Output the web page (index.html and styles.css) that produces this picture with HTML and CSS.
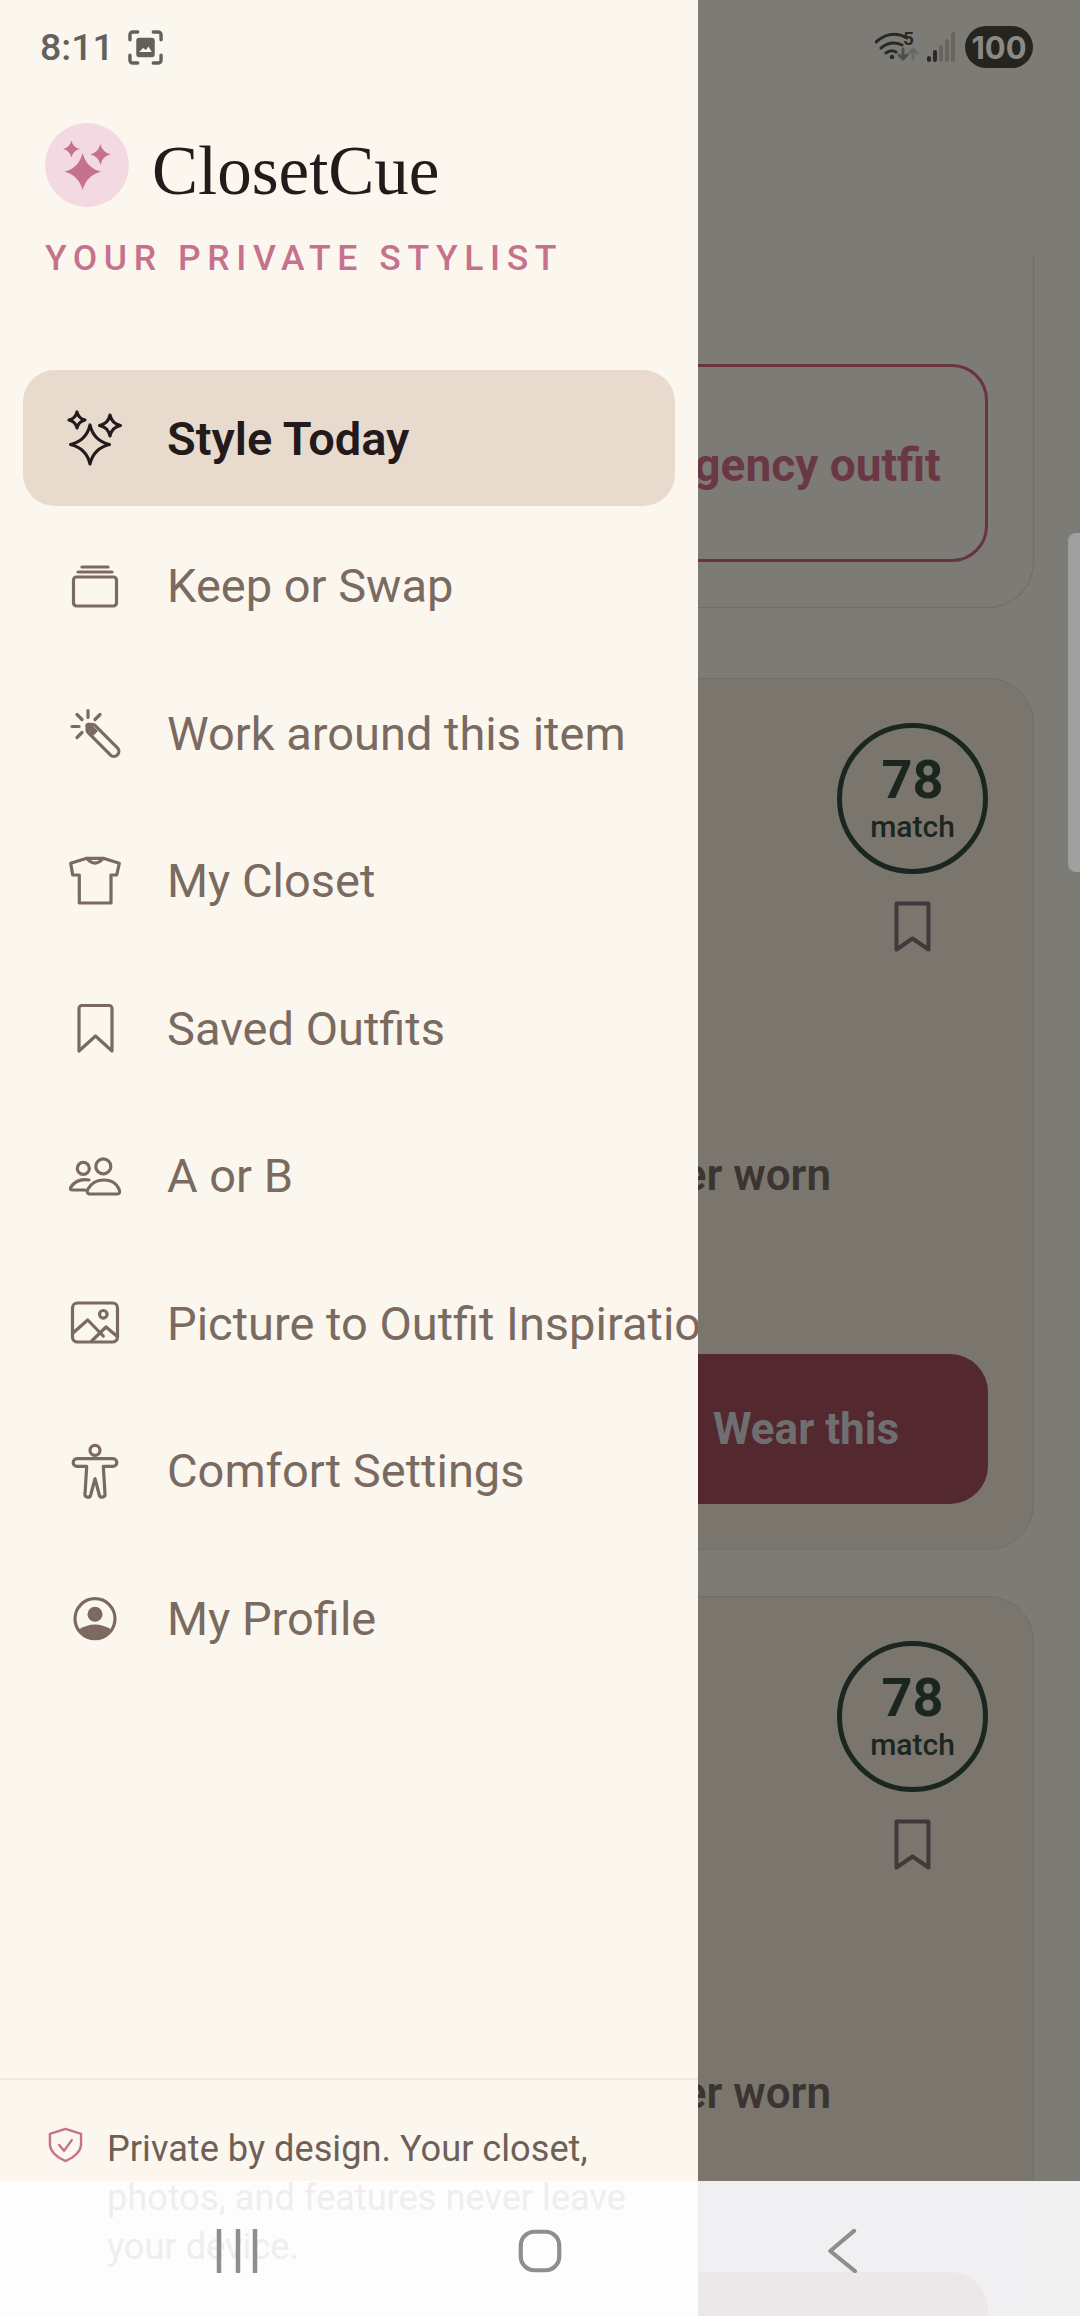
FILE: index.html
```html
<!DOCTYPE html>
<html>
<head>
<meta name="viewport" content="width=device-width, initial-scale=1">
<link rel="stylesheet" href="styles.css">
</head>
<body>
<div class="screen">

  <!-- dimmed page behind the drawer -->
  <div class="backdrop">
    <div class="card card-top">
      <div class="btn-outline">Emergency outfit</div>
    </div>
    <div class="card card-fill">
      <div class="score"><b>78</b><span>match</span></div>
      <svg class="save" viewBox="0 0 37 51"><path d="M2.5 2.5h32v46l-16-11-16 11z"/></svg>
      <div class="worn">Never worn</div>
      <div class="btn-wear">Wear this</div>
    </div>
    <div class="card card-fill">
      <div class="score"><b>78</b><span>match</span></div>
      <svg class="save" viewBox="0 0 37 51"><path d="M2.5 2.5h32v46l-16-11-16 11z"/></svg>
      <div class="worn">Never worn</div>
      <div class="btn-wear">Wear this</div>
    </div>
  </div>
  <div class="scroll-thumb"></div>

  <div class="drawer">
    <div class="brand">
      <div class="brand-row">
        <svg class="logo" viewBox="0 0 84 84">
          <circle cx="42" cy="42" r="42" fill="#f2d9e2"/>
          <path fill="#c6728c" d="M37.600 30Q41.500 45 56 48.700Q41.500 52.500 37.600 67Q33.700 52.500 19.600 48.700Q33.700 45 37.600 30z"/>
          <path fill="#c6728c" d="M26.400 17.500Q28 24.500 35 26Q28 27.500 26.400 34.500Q24.800 27.500 18 26Q24.800 24.500 26.400 17.500z"/>
          <path fill="#c6728c" d="M55.400 21Q57.400 29.300 65.500 31.300Q57.400 33.300 55.400 42Q53.400 33.300 45.400 31.300Q53.400 29.300 55.400 21z"/>
        </svg>
        <div class="brand-name">ClosetCue</div>
      </div>
      <div class="tagline">YOUR PRIVATE STYLIST</div>
    </div>

    <ul class="menu">
      <li class="menu-item selected">
        <svg class="ico" viewBox="0 0 60 60">
          <path d="M25 17Q28.500 32.500 44.500 36.500Q28.500 40.500 25 56Q21.500 40.500 5.500 36.500Q21.500 32.500 25 17z"/>
          <path d="M12 4Q13.500 10.500 20 12Q13.500 13.500 12 20Q10.500 13.500 4 12Q10.500 10.500 12 4z"/>
          <path d="M45 7Q46.800 15.700 55.500 17.500Q46.800 19.300 45 28Q43.200 19.300 34.500 17.500Q43.200 15.700 45 7z"/>
        </svg>
        <span>Style Today</span>
      </li>
      <li class="menu-item">
        <svg class="ico" viewBox="0 0 60 60">
          <rect x="8.500" y="21" width="43" height="29" rx="3"/>
          <path d="M13 16h34M17 11h26"/>
        </svg>
        <span>Keep or Swap</span>
      </li>
      <li class="menu-item">
        <svg class="ico" viewBox="0 0 60 60">
          <path d="M23 7.500v7M12 11.500l5 5M35 11.500l-5 5M7 23.500h7M12 34.500l5-5"/>
          <rect x="18" y="31" width="41" height="10" rx="5" transform="rotate(45 36.500 36)"/>
          <path class="solid" d="M21 25a3 3 0 0 1 5-4l7 7-5 5z"/>
        </svg>
        <span>Work around this item</span>
      </li>
      <li class="menu-item">
        <svg class="ico" viewBox="0 0 60 60">
          <path d="M21.700 7.300Q30 17 38.300 7.300L54.300 12.300L51.700 24H46V52H14.300V24H7.700L5.700 12.300z"/>
          <path d="M21.700 7.300H38.300"/>
        </svg>
        <span>My Closet</span>
      </li>
      <li class="menu-item">
        <svg class="ico" viewBox="0 0 60 60">
          <path d="M17 7.500h27a3 3 0 0 1 3 3v42.500L30.500 38 14 53V10.500a3 3 0 0 1 3-3z"/>
        </svg>
        <span>Saved Outfits</span>
      </li>
      <li class="menu-item">
        <svg class="ico" viewBox="0 0 60 60">
          <circle cx="38.300" cy="20.400" r="7.500"/>
          <circle cx="18.300" cy="22.400" r="6"/>
          <path d="M24 48Q21 47 23 43Q28 34 39 34Q50 34 54 43Q56 48 52 48z"/>
          <path d="M24 34Q12 32 6 41Q4 44 8 44H20"/>
        </svg>
        <span>A or B</span>
      </li>
      <li class="menu-item">
        <svg class="ico" viewBox="0 0 60 60">
          <rect x="7.500" y="10" width="45" height="39" rx="5"/>
          <circle cx="38.300" cy="21.300" r="3.800"/>
          <path d="M8.300 39.700L22.700 27L38.300 43M26.700 48L41 34L51.700 43"/>
        </svg>
        <span>Picture to Outfit Inspiration</span>
      </li>
      <li class="menu-item">
        <svg class="ico" viewBox="0 0 60 60">
          <circle cx="30" cy="9.300" r="5"/>
          <path d="M12 17.700H48a3.800 3.800 0 0 1 0 7.600H38.300L40 53a2.900 2.900 0 0 1-5.700 1L30 37.700L25.700 54a2.900 2.900 0 0 1-5.700-1L21.700 25.300H12a3.800 3.800 0 0 1 0-7.600z"/>
        </svg>
        <span>Comfort Settings</span>
      </li>
      <li class="menu-item">
        <svg class="ico" viewBox="0 0 60 60">
          <circle cx="30" cy="30.700" r="20"/>
          <circle class="solid" cx="30" cy="26.300" r="7.500"/>
          <path class="solid" d="M13 42Q30 31 47 42A20 20 0 0 1 13 42z"/>
        </svg>
        <span>My Profile</span>
      </li>
    </ul>

    <div class="drawer-foot">
      <svg class="shield" viewBox="0 0 36 36">
        <path d="M18 1.500L34 6.500V18Q33 28 18 34.500Q3 28 2 18V6.500z"/>
        <path d="M11.500 18l5 6 8-11"/>
      </svg>
      <p>Private by design. Your closet, photos, and features never leave your device.</p>
    </div>
  </div>

  <div class="status-bar">
    <div class="status-left">
      <span class="clock">8:11</span>
      <svg class="shot" viewBox="0 0 36 36">
        <path d="M2 10V5a3 3 0 0 1 3-3h5M26 2h5a3 3 0 0 1 3 3v5M34 26v5a3 3 0 0 1-3 3h-5M10 34H5a3 3 0 0 1-3-3v-5"/>
        <rect class="shot-fill" x="8.500" y="8" width="19" height="20" rx="3"/>
        <path class="shot-pic" d="M11.500 22.500l4-4 3 2 2.500-3.500 3.500 5.500z"/>
      </svg>
    </div>
    <div class="status-right">
      <svg class="wifi" viewBox="0 0 44 32">
        <path d="M1 11Q16-2 32 7M6 17Q16 9 27 14M11 22Q16 18 21 21"/>
        <circle cx="17" cy="26" r="2.300"/>
        <text x="28" y="14">5</text>
        <path class="wifi-down" d="M28 18v10M24 24l4 4 4-4"/>
        <path class="wifi-up" d="M38 28V18M34 22l4-4 4 4"/>
      </svg>
      <svg class="signal" viewBox="0 0 28 30">
        <rect class="on" x="0" y="24" width="4" height="6" rx="2"/>
        <rect class="on" x="6" y="18" width="4" height="12" rx="2"/>
        <rect x="12" y="13" width="4" height="17" rx="2"/>
        <rect x="18" y="7" width="4" height="23" rx="2"/>
        <rect x="24" y="0" width="4" height="30" rx="2"/>
      </svg>
      <span class="battery">100</span>
    </div>
  </div>

  <div class="nav-bar">
    <svg class="nav-ico" viewBox="0 0 44 44"><path d="M3 1v42M22 1v42M39 1v42"/></svg>
    <svg class="nav-ico" viewBox="0 0 48 48"><rect x="3" y="3" width="42" height="42" rx="15"/></svg>
    <svg class="nav-ico" viewBox="0 0 44 48"><path d="M35 2L9 24l27 22"/></svg>
  </div>
</div>
</body>
</html>
```

FILE: styles.css
```css
* {
  box-sizing: border-box;
}

body {
  margin: 0;
  font-family: Roboto, "Liberation Sans", sans-serif;
}

.screen {
  position: relative;
  width: 1080px;
  height: 2316px;
  overflow: hidden;
  background: #7c7b76;
}

/* page behind the scrim */
.backdrop {
  position: absolute;
  top: 255px;
  left: 0;
  right: 0;
  padding: 0 46px;
}

.card {
  border: 1px solid #706e67;
  border-radius: 46px;
  padding: 44px 45px 45px;
  display: flex;
  flex-direction: column;
  margin-bottom: 46px;
}

.card-top {
  height: 353px;
  padding-top: 109px;
  margin-bottom: 70px;
  border-top: 0;
  border-left: 0;
  border-top-left-radius: 0;
  border-top-right-radius: 0;
}

.card-fill {
  background: #7a766d;
}

.btn-outline {
  align-self: flex-end;
  width: 466px;
  height: 200px;
  padding: 4px 0 0 18px;
  border: 3px solid #6a3340;
  border-radius: 36px;
  display: flex;
  align-items: center;
  justify-content: center;
  font-size: 46px;
  font-weight: 700;
  color: #6a3845;
}

.score {
  align-self: flex-end;
  width: 151px;
  height: 151px;
  border: 5px solid #1b2620;
  border-radius: 50%;
  display: flex;
  flex-direction: column;
  align-items: center;
  justify-content: center;
  color: #1b2620;
}

.score b {
  font-size: 54px;
  line-height: 56px;
}

.score span {
  margin-top: 1px;
  font-size: 30px;
  font-weight: 500;
  line-height: 36px;
}

.save {
  align-self: flex-end;
  width: 37px;
  height: 51px;
  margin: 27px 57px 0 0;
  fill: none;
  stroke: #40383a;
  stroke-width: 4;
  stroke-linejoin: round;
}

.worn {
  align-self: flex-end;
  margin: 193px 157px 0 0;
  font-size: 44px;
  font-weight: 600;
  line-height: 60px;
  color: #3c3431;
}

.btn-wear {
  align-self: flex-end;
  width: 364px;
  height: 150px;
  margin-top: 149px;
  padding-bottom: 1px;
  border-radius: 38px;
  background: #54282f;
  display: flex;
  align-items: center;
  justify-content: center;
  font-size: 44px;
  font-weight: 700;
  color: #6f6f72;
}

.scroll-thumb {
  position: absolute;
  top: 533px;
  right: 0;
  width: 12px;
  height: 339px;
  border-radius: 8px 0 0 8px;
  background: #a0a09e;
}

/* drawer */
.drawer {
  position: absolute;
  top: 0;
  left: 0;
  bottom: 0;
  width: 698px;
  background: #fbf7ef;
  display: flex;
  flex-direction: column;
  padding-top: 123px;
}

.brand {
  padding-left: 45px;
}

.brand-row {
  display: flex;
  align-items: center;
  gap: 23px;
}

.logo {
  width: 84px;
  height: 84px;
}

.brand-name {
  margin-top: 12px;
  font-family: "Liberation Serif", serif;
  font-size: 69px;
  line-height: 70px;
  color: #231a1c;
}

.tagline {
  margin-top: 31px;
  font-size: 35.500px;
  font-weight: 500;
  line-height: 40px;
  letter-spacing: 6.600px;
  color: #c6728c;
  white-space: nowrap;
}

.menu {
  list-style-type: none;
  margin: 92px 0 0;
  padding: 0 23px;
  display: flex;
  flex-direction: column;
  gap: 11.500px;
}

.menu-item {
  height: 136px;
  padding-left: 42px;
  margin-right: -23px;
  display: flex;
  align-items: center;
  gap: 42px;
  font-size: 47px;
  color: #7a6a60;
  white-space: nowrap;
  overflow: hidden;
}

.selected {
  margin-right: 0;
  background: #e8dacd;
  border-radius: 32px;
  font-weight: 600;
  color: #231a1c;
}

.ico {
  flex: none;
  width: 60px;
  height: 60px;
  fill: none;
  stroke: currentColor;
  stroke-width: 3.200;
  stroke-linejoin: round;
  stroke-linecap: round;
}

.ico .solid {
  fill: currentColor;
  stroke: none;
}

.drawer-foot {
  margin-top: auto;
  border-top: 2px solid #f1e9e0;
  padding: 44px 60px 45px 48px;
  display: flex;
  align-items: flex-start;
  gap: 24px;
}

.shield {
  flex: none;
  width: 35px;
  height: 36px;
  margin-top: 3px;
  fill: none;
  stroke: #c6728c;
  stroke-width: 2.500;
  stroke-linejoin: round;
  stroke-linecap: round;
}

.drawer-foot p {
  margin: 0;
  font-size: 36.200px;
  line-height: 49px;
  color: #6f6057;
}

/* status bar */
.status-bar {
  position: absolute;
  top: 26px;
  left: 0;
  right: 0;
  height: 42px;
  padding: 0 47px 0 40px;
  display: flex;
  align-items: center;
  justify-content: space-between;
}

.status-left {
  display: flex;
  align-items: center;
  gap: 14px;
}

.clock {
  font-size: 37.500px;
  font-weight: 500;
  color: #62615c;
}

.shot {
  width: 35px;
  height: 35px;
  fill: none;
  stroke: #62615c;
  stroke-width: 3.500;
  stroke-linecap: round;
}

.shot-fill {
  fill: #62615c;
  stroke: none;
}

.shot-pic {
  fill: #fbf7ef;
  stroke: none;
}

.status-right {
  display: flex;
  align-items: center;
}

.wifi {
  width: 44px;
  height: 32px;
  fill: none;
  stroke: #2b2926;
  stroke-width: 3;
  stroke-linecap: round;
}

.wifi circle {
  fill: #2b2926;
  stroke: none;
}

.wifi text {
  font-size: 19px;
  font-weight: 700;
  fill: #2b2926;
  stroke: none;
}

.wifi-down {
  stroke: #4e4d49;
}

.wifi-up {
  stroke: #6a6965;
}

.signal {
  width: 28px;
  height: 30px;
  margin-left: 8px;
  fill: #666560;
}

.signal .on {
  fill: #2b2926;
}

.battery {
  width: 68px;
  height: 42px;
  margin-left: 10px;
  border-radius: 21px;
  background: #26241f;
  display: flex;
  align-items: center;
  justify-content: center;
  font-family: Inter, sans-serif;
  font-size: 31px;
  font-weight: 700;
  color: #8a8984;
}

/* nav bar lies over everything, mostly opaque */
.nav-bar {
  position: absolute;
  left: 0;
  right: 0;
  bottom: 0;
  height: 135px;
  padding: 48px 87px 0;
  background: rgba(253, 253, 255, 0.9);
  display: grid;
  grid-template-columns: repeat(3, 1fr);
  justify-items: center;
  align-items: start;
}

.nav-ico {
  height: 44px;
  fill: none;
  stroke: #8e8e8e;
  stroke-width: 4.500;
  stroke-linecap: round;
  stroke-linejoin: round;
}
```
